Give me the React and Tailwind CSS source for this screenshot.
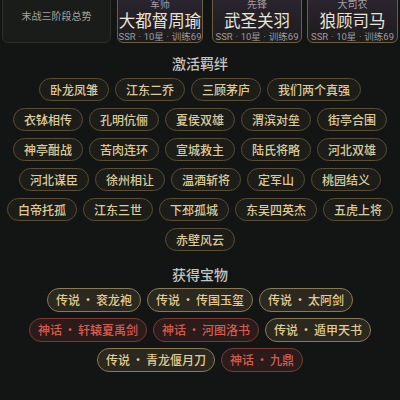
import React from 'react';

const HEROES = [
  { role: '军师', name: '大都督周瑜', w: 'w-[86px]', ml: 'ml-[6px]' },
  { role: '先锋', name: '武圣关羽', w: 'w-[90px]', ml: 'ml-[9px]' },
  { role: '大司农', name: '狼顾司马', w: 'w-[91px]', ml: 'ml-[5px]' },
];

const BOND_ROWS = [
  ['卧龙凤雏', '江东二乔', '三顾茅庐', '我们两个真强'],
  ['衣钵相传', '孔明伉俪', '夏侯双雄', '渭滨对垒', '街亭合围'],
  ['神亭酣战', '苦肉连环', '宣城救主', '陆氏将略', '河北双雄'],
  ['河北谋臣', '徐州相让', '温酒斩将', '定军山', '桃园结义'],
  ['白帝托孤', '江东三世', '下邳孤城', '东吴四英杰', '五虎上将'],
  ['赤壁风云'],
];

const TREASURE_ROWS = [
  [['传说', '衮龙袍'], ['传说', '传国玉玺'], ['传说', '太阿剑']],
  [['神话', '轩辕夏禹剑'], ['神话', '河图洛书'], ['传说', '遁甲天书']],
  [['传说', '青龙偃月刀'], ['神话', '九鼎']],
];

// the CJK font draws "·" full-width, so keep the separator in a fixed box
function Dot({ className }) {
  return <span className={`inline-block text-center ${className}`}>·</span>;
}

function HeroCard({ hero }) {
  return (
    <div
      className={`${hero.w} ${hero.ml} shrink-0 h-[51px] rounded-[6px] border border-[#6c5f43] bg-gradient-to-b from-[#2c2531] to-[#1d1c1c] pt-[5px] pb-[2px] flex flex-col items-center`}
    >
      <div className="text-[10px] leading-[12px] text-[#a59ea6]">{hero.role}</div>
      <div className="text-[16.5px] leading-[20px] text-[#e8e4d8] whitespace-nowrap">{hero.name}</div>
      <div className="mt-[1px] flex font-['Roboto','Noto_Sans_CJK_SC',sans-serif] text-[9.5px] leading-[12px] text-[#9c9c9a] whitespace-nowrap">
        <span>SSR</span>
        <Dot className="w-[8px]" />
        <span>10星</span>
        <Dot className="w-[8px]" />
        <span>训练69</span>
      </div>
    </div>
  );
}

function SectionTitle({ children, className }) {
  return (
    <div className={`text-center text-[14px] leading-[20px] font-medium text-[#c4c4c2] ${className}`}>
      {children}
    </div>
  );
}

function BondChip({ label }) {
  return (
    <span className="h-[23px] px-[10px] rounded-full border border-[#5a4e34] bg-[#1c1c19] text-[12px] leading-[21px] font-medium text-[#dccb98] whitespace-nowrap">
      {label}
    </span>
  );
}

function TreasureChip({ tier, name }) {
  const myth = tier === '神话';
  const tone = myth
    ? 'border-[#7a3a33] bg-[#2b1b1b] text-[#d65c50]'
    : 'border-[#8a7b52] bg-[#2a281f] text-[#e4cb8e]';
  return (
    <span className={`h-[24px] px-[8px] rounded-full border ${tone} text-[12px] leading-[22px] font-medium whitespace-nowrap flex`}>
      <span>{tier}</span>
      <Dot className="w-[16px]" />
      <span>{name}</span>
    </span>
  );
}

export default function App() {
  return (
    <div className="w-[400px] h-[400px] overflow-hidden bg-[#131514] font-['Noto_Sans_CJK_SC',sans-serif]">
      {/* top cards, scrolled partly out of view */}
      <div className="flex -mt-[8px]">
        <div className="ml-[2px] w-[109px] shrink-0 h-[51px] rounded-[6px] border border-[#2d2f2c] bg-[#1a1c1a] flex items-center justify-center pb-[4px]">
          <span className="text-[10px] text-[#a2a2a0]">末战三阶段总势</span>
        </div>
        {HEROES.map((h) => (
          <HeroCard key={h.name} hero={h} />
        ))}
      </div>

      <SectionTitle className="mt-[10px]">激活羁绊</SectionTitle>
      <div className="mt-[5px] flex flex-col gap-y-[7px]">
        {BOND_ROWS.map((row, i) => (
          <div key={i} className="flex justify-center gap-x-[6px]">
            {row.map((b) => (
              <BondChip key={b} label={b} />
            ))}
          </div>
        ))}
      </div>

      <SectionTitle className="mt-[13px]">获得宝物</SectionTitle>
      <div className="mt-[4px] flex flex-col gap-y-[6px]">
        {TREASURE_ROWS.map((row, i) => (
          <div key={i} className="flex justify-center gap-x-[6px]">
            {row.map(([tier, name]) => (
              <TreasureChip key={name} tier={tier} name={name} />
            ))}
          </div>
        ))}
      </div>
    </div>
  );
}
